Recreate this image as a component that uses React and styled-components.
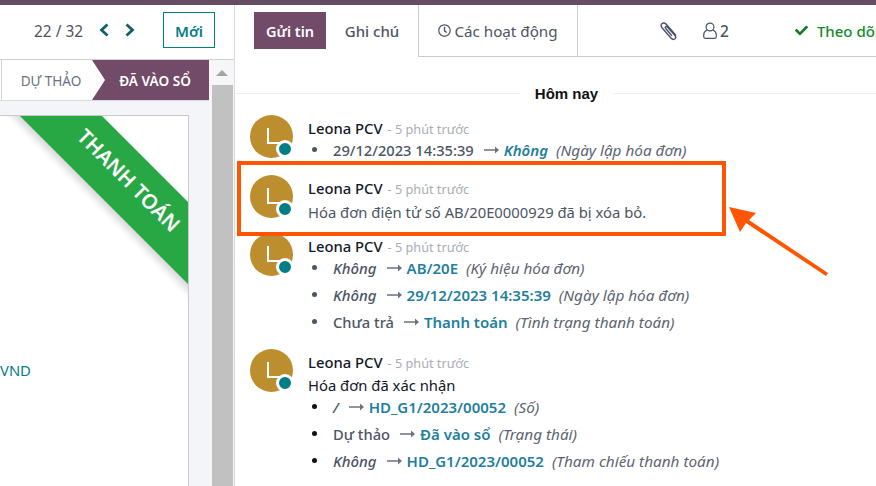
import React from "react";
import styled, { createGlobalStyle } from "styled-components";
import { FaCheck, FaRegClock } from "react-icons/fa";

const GlobalStyle = createGlobalStyle`
  html, body {
    margin: 0;
    padding: 0;
    width: 876px;
    height: 486px;
    overflow: hidden;
    background: #fff;
    font-family: "Noto Sans", "Open Sans", sans-serif;
    color: #374151;
  }
  * { box-sizing: border-box; }
`;

const Page = styled.div`
  position: relative;
  width: 876px;
  height: 486px;
  overflow: hidden;
  display: flex;
  flex-direction: column;
`;

const TopBar = styled.div`
  height: 5px;
  flex: none;
  background: #654d63;
`;

const Body = styled.div`
  flex: 1;
  min-height: 0;
  display: flex;
`;

const FormSide = styled.div`
  width: 235px;
  flex: none;
  display: flex;
  flex-direction: column;
  border-right: 1px solid #d8dadd;
`;

const ControlPanel = styled.div`
  height: 55px;
  flex: none;
  display: flex;
  align-items: center;
  justify-content: flex-end;
  padding: 0 19px 5px 0;
  border-bottom: 1px solid #d0d0d6;
`;

const Pager = styled.span`
  font-size: 15.400px;
  color: #4b5563;
  margin: 4px 15px 0 0;
`;

const PagerArrow = styled.svg`
  width: 12px;
  height: 14px;
  margin-right: ${p => p.$gap}px;
  color: #0f6068;
`;

const NewButton = styled.button`
  width: 52px;
  height: 36px;
  margin-left: 27px;
  border: 1px solid #017e84;
  background: #fff;
  color: #017e84;
  font: 600 15px "Noto Sans", sans-serif;
  padding: 2px 0 0;
`;

const FormScroll = styled.div`
  flex: 1;
  min-height: 0;
  display: flex;
`;

const FormContent = styled.div`
  width: 209px;
  flex: none;
  display: flex;
  flex-direction: column;
`;

const StatusRow = styled.div`
  height: 41px;
  flex: none;
  display: flex;
  background: #fff;
  border-bottom: 1px solid #d8dadd;
`;

const Step = styled.div`
  position: relative;
  height: 100%;
  display: flex;
  align-items: center;
  font-size: 13.600px;
  font-weight: ${p => (p.$active ? 600 : 400)};
  color: ${p => (p.$active ? "#fff" : "#6b7280")};
  background: ${p => (p.$active ? "#714b67" : "#fff")};
  justify-content: center;
  width: ${p => p.$w}px;
  clip-path: ${p => (p.$active ? "polygon(0 0, 100% 0, 100% 100%, 0 100%, 13px 50%)" : "none")};
  border-left: ${p => (p.$active ? "none" : "1px solid #d0d0d6")};
  margin-left: ${p => (p.$active ? "-12px" : "1px")};
  padding: ${p => (p.$active ? "0 0 0 9px" : "0 4px 0 0")};
`;

const SheetArea = styled.div`
  flex: 1;
  min-height: 0;
  background: #f4f5f9;
  padding: 14px 20px 0 0;
`;

const Sheet = styled.div`
  position: relative;
  height: 100%;
  background: #fff;
  border: 1px solid #c9cad0;
  border-left: none;
  border-bottom: none;
  padding-top: 244px;
  font-size: 14.800px;
  color: #017e84;
  overflow: hidden;
`;

const Ribbon = styled.div`
  position: absolute;
  top: 37px;
  right: -89px;
  width: 300px;
  height: 58px;
  background: #28a745;
  color: #fff;
  font-size: 20.500px;
  font-weight: 600;
  line-height: 52px;
  text-align: center;
  transform: rotate(45deg);
  box-shadow: 0 4px 8px rgba(0, 0, 0, 0.18);
`;

const Scrollbar = styled.div`
  width: 25px;
  flex: none;
  display: flex;
  flex-direction: column;
  align-items: center;
  background: #f6f6f8;
  padding: 0 1px 0 2px;
`;

const ScrollUp = styled.div`
  width: 0;
  height: 0;
  flex: none;
  margin-top: 10px;
  border-left: 6px solid transparent;
  border-right: 6px solid transparent;
  border-bottom: 6px solid #a3a3a3;
  border-top: 0;
`;

const ScrollThumb = styled.div`
  width: 21px;
  flex: 1;
  margin-top: 9px;
  background: #c1c1c1;
`;

const Chatter = styled.div`
  flex: 1;
  min-width: 0;
  display: flex;
  flex-direction: column;
`;

const ChatterTop = styled.div`
  height: 52px;
  flex: none;
  display: flex;
  align-items: flex-start;
  padding-left: 19px;
`;

const SendButton = styled.button`
  width: 72px;
  height: 37px;
  margin-top: 7px;
  border: none;
  padding: 0;
  background: #714b67;
  color: #fff;
  font: 600 14.500px "Noto Sans", sans-serif;
`;

const NoteTab = styled.div`
  width: 92px;
  height: 37px;
  margin-top: 7px;
  display: flex;
  align-items: center;
  justify-content: center;
  font-size: 15px;
  font-weight: 500;
  color: #4b5563;
`;

const ActivityTab = styled.div`
  width: 160px;
  height: 52px;
  display: flex;
  align-items: center;
  justify-content: center;
  gap: 3px;
  font-size: 15.200px;
  color: #4b5563;
  border-left: 1px solid #c9cad0;
  border-right: 1px solid #c9cad0;
  border-bottom: 1px solid #c9cad0;
  svg { width: 13px; height: 13px; }
`;

const Tools = styled.div`
  flex: 1;
  height: 52px;
  display: flex;
  align-items: center;
  padding: 0 0 0 82px;
  border-bottom: 1px solid #c9cad0;
  white-space: nowrap;
  overflow: hidden;
`;

const ClipIcon = styled.svg`
  width: 18px;
  height: 20px;
  flex: none;
  fill: none;
  stroke: #46536a;
  stroke-width: 1.400;
`;

const PersonIcon = styled.svg`
  width: 14px;
  height: 17px;
  flex: none;
  margin-left: 25px;
  fill: none;
  stroke: #46536a;
  stroke-width: 1.200;
`;

const Count = styled.span`
  font-size: 15.500px;
  font-weight: 500;
  color: #4b5563;
  margin-left: 3px;
  margin-right: 66px;
`;

const Follow = styled.span`
  display: flex;
  align-items: center;
  gap: 9px;
  font-size: 15px;
  font-weight: 500;
  color: #128a2c;
  svg { width: 13px; height: 13px; color: #0f7d28; }
`;

const DayRow = styled.div`
  width: 663px;
  flex: none;
  height: 14px;
  margin-top: 29px;
  display: flex;
  align-items: center;
  gap: 15px;
  &::before, &::after {
    content: "";
    flex: 1;
    height: 1px;
    background: #eceef0;
  }
`;

const DayLabel = styled.span`
  font: 700 15px "Liberation Sans", Arial, sans-serif;
  color: #111;
`;

const Feed = styled.div`
  display: flex;
  flex-direction: column;
`;

const Message = styled.div`
  display: flex;
  padding-left: 15px;
  margin-top: ${p => p.$top}px;
`;

const Avatar = styled.div`
  position: relative;
  width: 43px;
  height: 43px;
  flex: none;
  border-radius: 50%;
  background: #bd8e2e;
  color: #fff;
`;

const AvatarLetter = styled.svg`
  position: absolute;
  left: 17px;
  top: 13px;
  width: 13px;
  height: 16px;
`;

const Presence = styled.span`
  position: absolute;
  right: -1px;
  bottom: 0;
  width: 18px;
  height: 18px;
  border-radius: 50%;
  background: #017e84;
  border: 3px solid #fff;
`;

const MessageBody = styled.div`
  margin-left: 15px;
  min-width: 0;
`;

const Author = styled.div`
  display: flex;
  align-items: baseline;
  height: 21px;
  padding-top: 3px;
  font-size: 14.800px;
  font-weight: 500;
  line-height: 20px;
  color: #111827;
  white-space: nowrap;
`;

const Ago = styled.span`
  margin-left: 5px;
  font-size: 12.700px;
  font-weight: 400;
  color: #a8adb5;
`;

const MessageText = styled.div`
  font-size: 14.800px;
  line-height: 16px;
  margin-top: ${p => p.$top}px;
  white-space: nowrap;
  color: ${p => (p.$dark ? "#111827" : "#4b5563")};
`;

const Changes = styled.ul`
  list-style: none;
  margin: 0;
  padding: 0;
`;

const Change = styled.li`
  position: relative;
  display: flex;
  align-items: center;
  height: 27px;
  padding-left: 25px;
  font-size: 14.700px;
  white-space: nowrap;
  color: #4b5563;
  &::before {
    content: "";
    position: absolute;
    left: 4px;
    top: 11px;
    width: 5px;
    height: 5px;
    border-radius: 50%;
    background: ${p => (p.$light ? "#4b5563" : "#111")};
  }
`;

const OldValue = styled.span`
  font-size: ${p => (p.$plain ? "14.700px" : "15px")};
  font-style: ${p => (p.$plain ? "normal" : "italic")};
  font-weight: 500;
  color: #4b5563;
`;

const ArrowIcon = styled.svg`
  width: 15px;
  height: 8px;
  margin: 0 5px 0 10px;
  color: #6b7280;
  flex: none;
`;

const NewValue = styled.span`
  font-size: 15px;
  font-weight: 600;
  font-style: ${p => (p.$italic ? "italic" : "normal")};
  color: #1f7f9c;
`;

const FieldName = styled.span`
  margin-left: 8px;
  font-size: 15.300px;
  font-style: italic;
  color: #5b6470;
`;

const Highlight = styled.div`
  position: absolute;
  left: 237px;
  top: 161px;
  width: 489px;
  height: 75px;
  border: 4px solid #ff5500;
  pointer-events: none;
`;

const Pointer = styled.svg`
  position: absolute;
  left: 725px;
  top: 199px;
  width: 110px;
  height: 80px;
  pointer-events: none;
`;

const Arrow = () => (
  <ArrowIcon viewBox="0 0 15 8">
    <path d="M0 3.200h11V0.600L15 4l-4 3.400V4.800H0z" fill="currentColor" />
  </ArrowIcon>
);

const AuthorAvatar = () => (
  <Avatar>
    <AvatarLetter viewBox="0 0 13 16">
      <path d="M1 0v15h12" fill="none" stroke="#fff" strokeWidth="2" />
    </AvatarLetter>
    <Presence />
  </Avatar>
);

const Head = () => (
  <Author>
    Leona PCV<Ago>- 5 phút trước</Ago>
  </Author>
);

const Line = ({ from, plain, to, italic, field, light }) => (
  <Change $light={light}>
    <OldValue $plain={plain}>{from}</OldValue>
    <Arrow />
    <NewValue $italic={italic}>{to}</NewValue>
    <FieldName>({field})</FieldName>
  </Change>
);

export default function App() {
  return (
    <>
      <GlobalStyle />
      <Page>
        <TopBar />
        <Body>
          <FormSide>
            <ControlPanel>
              <Pager>22 / 32</Pager>
              <PagerArrow $gap={14} viewBox="0 0 12 14">
                <path d="M9.500 1.500 3.500 7l6 5.500" fill="none" stroke="currentColor" strokeWidth="2.800" />
              </PagerArrow>
              <PagerArrow $gap={0} viewBox="0 0 12 14">
                <path d="M2.500 1.500 8.500 7l-6 5.500" fill="none" stroke="currentColor" strokeWidth="2.800" />
              </PagerArrow>
              <NewButton>Mới</NewButton>
            </ControlPanel>
            <FormScroll>
              <FormContent>
                <StatusRow>
                  <Step $w={103}>DỰ THẢO</Step>
                  <Step $active $w={117}>ĐÃ VÀO SỔ</Step>
                </StatusRow>
                <SheetArea>
                  <Sheet>
                    <Ribbon>THANH TOÁN</Ribbon>
                    VND
                  </Sheet>
                </SheetArea>
              </FormContent>
              <Scrollbar>
                <ScrollUp />
                <ScrollThumb />
              </Scrollbar>
            </FormScroll>
          </FormSide>
          <Chatter>
            <ChatterTop>
              <SendButton>Gửi tin</SendButton>
              <NoteTab>Ghi chú</NoteTab>
              <ActivityTab>
                <FaRegClock />
                Các hoạt động
              </ActivityTab>
              <Tools>
                <ClipIcon viewBox="0 0 18 20">
                  <path d="M16 14.500 6.500 3.500C5 1.800 3 1.600 1.900 2.700.8 3.800 1 5.600 2.400 7.200l8.300 9.600c1.400 1.600 3.200 1.900 4.300 1 1-1 .9-2.300-.2-3.600L7.600 6.200c-.7-.8-1.500-1-2-.5s-.4 1.200.3 2l6 7" />
                </ClipIcon>
                <PersonIcon viewBox="0 0 14 17">
                  <circle cx="7" cy="5" r="3.900" />
                  <path d="M4 8C2 9 .7 10.500 .7 13v1.500c0 1 .6 1.800 1.600 1.800h9.400c1 0 1.600-.8 1.600-1.800V13c0-2.500-1.300-4-3.300-5" />
                </PersonIcon>
                <Count>2</Count>
                <Follow>
                  <FaCheck />
                  Theo dõi
                </Follow>
              </Tools>
            </ChatterTop>
            <DayRow>
              <DayLabel>Hôm nay</DayLabel>
            </DayRow>
            <Feed>
              <Message $top={15}>
                <AuthorAvatar />
                <MessageBody>
                  <Head />
                  <Changes>
                    <Line from="29/12/2023 14:35:39" plain to="Không" italic field="Ngày lập hóa đơn" light />
                  </Changes>
                </MessageBody>
              </Message>
              <Message $top={12}>
                <AuthorAvatar />
                <MessageBody>
                  <Head />
                  <MessageText $top={8}>Hóa đơn điện tử số AB/20E0000929 đã bị xóa bỏ.</MessageText>
                </MessageBody>
              </Message>
              <Message $top={13}>
                <AuthorAvatar />
                <MessageBody>
                  <Head />
                  <Changes>
                    <Line from="Không" to="AB/20E" field="Ký hiệu hóa đơn" light />
                    <Line from="Không" to="29/12/2023 14:35:39" field="Ngày lập hóa đơn" light />
                    <Line from="Chưa trả" plain to="Thanh toán" field="Tình trạng thanh toán" light />
                  </Changes>
                </MessageBody>
              </Message>
              <Message $top={14}>
                <AuthorAvatar />
                <MessageBody>
                  <Head />
                  <MessageText $dark $top={7}>Hóa đơn đã xác nhận</MessageText>
                  <Changes>
                    <Line from="/" to="HD_G1/2023/00052" field="Số" />
                    <Line from="Dự thảo" plain to="Đã vào sổ" field="Trạng thái" />
                    <Line from="Không" to="HD_G1/2023/00052" field="Tham chiếu thanh toán" />
                  </Changes>
                </MessageBody>
              </Message>
            </Feed>
          </Chatter>
        </Body>
        <Highlight />
        <Pointer viewBox="0 0 110 80">
          <path d="M4 8 31 14 24 21 103 74 101 77 21 24 15 33z" fill="#ff5500" />
        </Pointer>
      </Page>
    </>
  );
}
